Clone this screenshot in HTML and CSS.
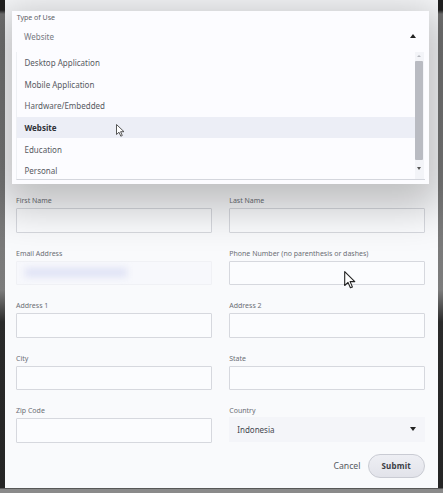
FILE: index.html
```html
<!DOCTYPE html>
<html lang="en">
<head>
<meta charset="utf-8">
<title>Type of Use</title>
<link rel="stylesheet" href="styles.css">
</head>
<body>
<div class="modal">
  <form class="form">
    <div class="grid">
      <div class="field"><label class="label">First Name</label><div class="input"></div></div>
      <div class="field"><label class="label">Last Name</label><div class="input"></div></div>
      <div class="field"><label class="label">Email Address</label><div class="input input-email"><span class="blur-text"></span></div></div>
      <div class="field"><label class="label">Phone Number (no parenthesis or dashes)</label><div class="input"></div></div>
      <div class="field"><label class="label">Address 1</label><div class="input"></div></div>
      <div class="field"><label class="label">Address 2</label><div class="input"></div></div>
      <div class="field"><label class="label">City</label><div class="input"></div></div>
      <div class="field"><label class="label">State</label><div class="input"></div></div>
      <div class="field"><label class="label">Zip Code</label><div class="input"></div></div>
      <div class="field"><label class="label">Country</label><div class="select"><span>Indonesia</span><span class="caret-down"></span></div></div>
    </div>
    <div class="actions">
      <span class="cancel">Cancel</span>
      <span class="submit">Submit</span>
    </div>
  </form>
</div>

<div class="popup">
  <div class="popup-label">Type of Use</div>
  <div class="popup-value"><span>Website</span><span class="caret-up"></span></div>
  <div class="listbox">
    <ul class="options">
      <li class="option">Desktop Application</li>
      <li class="option">Mobile Application</li>
      <li class="option">Hardware/Embedded</li>
      <li class="option option-active">Website</li>
      <li class="option">Education</li>
      <li class="option">Personal</li>
    </ul>
    <div class="scrollbar">
      <span class="sb-up"></span>
      <span class="sb-thumb"></span>
      <span class="sb-down"></span>
    </div>
  </div>
</div>

<svg class="cursor cursor-a" width="9" height="13" viewBox="0 0 9 13"><path d="M0.5 0.5 L0.5 10.5 L3 8.2 L4.8 12.2 L6.3 11.5 L4.6 7.7 L8 7.7 Z" fill="#fff" stroke="#444" stroke-width="0.9" stroke-linejoin="round"/></svg>
<svg class="cursor cursor-b" width="12" height="18" viewBox="0 0 12 18"><path d="M0.7 0.7 L0.7 14.5 L4 11.4 L6.4 16.8 L8.4 15.9 L6.1 10.6 L10.8 10.6 Z" fill="#fff" stroke="#222" stroke-width="1.1" stroke-linejoin="round"/></svg>
</body>
</html>
```

FILE: styles.css
```css
* { box-sizing: border-box; }
html, body { margin: 0; padding: 0; }
body {
  width: 443px;
  height: 493px;
  overflow: hidden;
  font-family: "Noto Sans", "DejaVu Sans", sans-serif;
  background: linear-gradient(to bottom, #202020 0, #202020 10px, #707070 14px, #7c7c7c 290px, #2a2a2a 322px, #252525 488px, #8a8a8a 489px, #8a8a8a 100%);
  position: relative;
}
.modal {
  margin: 0 5px;
  height: 488px;
  background: #f9fafc;
  padding: 196px 13px 0 11px;
}
.grid {
  display: grid;
  grid-template-columns: 1fr 1fr;
  column-gap: 17.5px;
  row-gap: 16px;
}
.field { display: flex; flex-direction: column; }
.label {
  font-size: 7px;
  line-height: 9px;
  color: #6b6e75;
  margin-bottom: 3px;
  white-space: nowrap;
}
.input {
  height: 24.5px;
  border: 1px solid #d6d8de;
  background: #fbfcfe;
  border-radius: 1px;
}
.input-email {
  border-color: #f0f1f5;
  background: #f7f8fc;
  display: flex;
  align-items: center;
  padding-left: 8px;
}
.blur-text {
  display: block;
  width: 102px;
  height: 9px;
  background: #dfe2f5;
  filter: blur(3.5px);
}
.select {
  height: 24.5px;
  margin-top: -1px;
  background: #f4f5f9;
  display: flex;
  align-items: center;
  justify-content: space-between;
  padding: 0 9px 0 8px;
  font-size: 8px;
  color: #444850;
}
.caret-down {
  width: 0; height: 0;
  border-left: 3.5px solid transparent;
  border-right: 3.5px solid transparent;
  border-top: 4px solid #222;
}
.actions {
  display: flex;
  justify-content: flex-end;
  align-items: center;
  gap: 7px;
  margin-top: 11px;
}
.cancel {
  font-size: 8.7px;
  color: #555960;
}
.submit {
  width: 57.5px;
  height: 24.5px;
  border-radius: 13px;
  border: 1px solid #c9cbd3;
  background: linear-gradient(#eeeff4, #e2e3ea);
  display: flex;
  align-items: center;
  justify-content: center;
  font-size: 8px;
  font-weight: 700;
  color: #3a3c44;
  letter-spacing: 0.2px;
}

/* dropdown overlay */
.popup {
  position: absolute;
  left: 12px;
  top: 11px;
  width: 417px;
  height: 173px;
  background: #fcfcff;
  padding: 3px 4.5px 5px 4px;
  box-shadow: 0 12px 40px 12px rgba(0, 0, 0, 0.24);
}
.popup-label {
  font-size: 7px;
  line-height: 8px;
  color: #5e6168;
  padding-left: 0.7px;
}
.popup-value {
  height: 28px;
  margin-bottom: 2px;
  display: flex;
  align-items: center;
  justify-content: space-between;
  padding: 0 8.5px 0 8px;
  font-size: 8px;
  color: #777a82;
}
.caret-up {
  width: 0; height: 0;
  border-left: 3.5px solid transparent;
  border-right: 3.5px solid transparent;
  border-bottom: 4px solid #222;
}
.listbox {
  position: relative;
  height: 127.5px;
  overflow: hidden;
  border-left: 1px solid #eef0f4;
  border-bottom: 1px solid #d4d6dd;
  display: flex;
}
.options {
  list-style: none;
  margin: 0;
  padding: 0;
  flex: 1;
}
.option {
  height: 21.6px;
  display: flex;
  align-items: center;
  padding-left: 7.5px;
  font-size: 8px;
  color: #575a62;
}
.option-active {
  background: #eceef6;
  font-weight: 700;
  color: #2f3138;
}
.scrollbar {
  width: 9px;
  margin-right: 1px;
  background: #f3f4f8;
  display: flex;
  flex-direction: column;
  align-items: center;
  padding-top: 3px;
}
.sb-up {
  width: 0; height: 0;
  border-left: 2px solid transparent;
  border-right: 2px solid transparent;
  border-bottom: 2.5px solid #b5b7be;
  margin-bottom: 4px;
}
.sb-thumb {
  width: 8px;
  height: 99px;
  background: #b9bbc2;
  border-radius: 1px;
}
.sb-down {
  width: 0; height: 0;
  border-left: 2.5px solid transparent;
  border-right: 2.5px solid transparent;
  border-top: 3px solid #555;
  margin-top: 7px;
}

.cursor { position: absolute; }
.cursor-a { left: 116px; top: 124px; }
.cursor-b { left: 344px; top: 271px; }
```
